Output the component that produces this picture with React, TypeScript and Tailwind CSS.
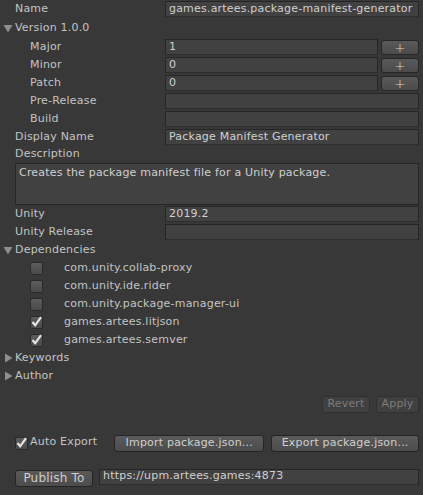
import React from 'react'

const font = { fontFamily: '"DejaVu Sans", Verdana, sans-serif' }

function Field({ value = '', className = '' }: { value?: string; className?: string }) {
  return (
    <div
      className={`h-[16px] flex items-center px-[3px] bg-[#414141] border border-[#262626] border-b-[#2e2e2e] text-[#d0d0d0] whitespace-nowrap overflow-hidden ${className}`}
    >
      {value}
    </div>
  )
}

function Row({ label, indent = false, value, plus = false, h = 'h-[18px]' }: { label: string; indent?: boolean; value?: string; plus?: boolean; h?: string }) {
  return (
    <div className={`flex items-center ${h}`}>
      <div className={`w-[165px] shrink-0 ${indent ? 'pl-[30px]' : 'pl-[15px]'}`}>{label}</div>
      <Field value={value} className="flex-1" />
      {plus && (
        <button className="ml-[3px] w-[38px] h-[15px] rounded-[3px] border border-[#262626] bg-gradient-to-b from-[#5a5a5a] to-[#4b4b4b] text-[#d8d8d8] text-[13px] font-light leading-none flex items-center justify-center">
          +
        </button>
      )}
    </div>
  )
}

function Arrow({ open }: { open: boolean }) {
  return (
    <svg width="10" height="10" viewBox="0 0 10 10" className="absolute left-[3px] top-1/2 -translate-y-1/2">
      {open ? <path d="M0.5 2 L9.5 2 L5 9.5 Z" fill="#8e8e8e" /> : <path d="M2 0.5 L9.5 5 L2 9.5 Z" fill="#8e8e8e" />}
    </svg>
  )
}

function Foldout({ label, open, h = 'h-[18px]' }: { label: string; open: boolean; h?: string }) {
  return (
    <div className={`relative flex items-center pl-[15px] ${h}`}>
      <Arrow open={open} />
      {label}
    </div>
  )
}

function Check({ on }: { on: boolean }) {
  return (
    <div className="relative w-[13px] h-[13px] rounded-[2px] border border-[#2a2a2a] bg-gradient-to-b from-[#5c5c5c] to-[#4a4a4a]">
      {on && (
        <svg width="13" height="13" viewBox="0 0 13 13" className="absolute -left-[1px] -top-[2px]">
          <path d="M2.5 7 L5.2 10.3 L11 2.2" fill="none" stroke="#e6e6e6" strokeWidth="2.2" strokeLinejoin="miter" />
        </svg>
      )}
    </div>
  )
}

function Btn({ children, className = '', disabled = false }: { children: React.ReactNode; className?: string; disabled?: boolean }) {
  return (
    <button
      className={`flex items-center justify-center rounded-[3px] border ${
        disabled
          ? 'border-[#303030] bg-[#404040] text-[#7c7c7c]'
          : 'border-[#242424] bg-gradient-to-b from-[#5a5a5a] to-[#4c4c4c] text-[#cfcfcf]'
      } ${className}`}
    >
      {children}
    </button>
  )
}

const deps = [
  { name: 'com.unity.collab-proxy', on: false },
  { name: 'com.unity.ide.rider', on: false },
  { name: 'com.unity.package-manager-ui', on: false },
  { name: 'games.artees.litjson', on: true },
  { name: 'games.artees.semver', on: true },
]

export default function App() {
  return (
    <div
      className="w-[423px] h-[495px] bg-[#383838] text-[#c4c4c4] text-[11px] tracking-[0.2px] pr-[4px] overflow-hidden"
      style={font}
    >
      <Row label="Name" value="games.artees.package-manifest-generator" />
      <Foldout label="Version 1.0.0" open h="h-[20px]" />
      <Row label="Major" indent value="1" plus />
      <Row label="Minor" indent value="0" plus />
      <Row label="Patch" indent value="0" plus />
      <Row label="Pre-Release" indent />
      <Row label="Build" indent />
      <Row label="Display Name" value="Package Manifest Generator" />
      <div className="h-[17px] flex items-center pl-[15px]">Description</div>
      <div className="ml-[15px] h-[42px] bg-[#414141] border border-[#262626] px-[3px] pt-[1px] text-[#d0d0d0]">
        Creates the package manifest file for a Unity package.
      </div>
      <Row label="Unity" value="2019.2" />
      <Row label="Unity Release" />
      <Foldout label="Dependencies" open />
      {deps.map(d => (
        <div key={d.name} className="h-[18px] flex items-center pl-[30px]">
          <Check on={d.on} />
          <span className="ml-[21px]">{d.name}</span>
        </div>
      ))}
      <Foldout label="Keywords" open={false} />
      <Foldout label="Author" open={false} />

      <div className="flex justify-end gap-[6px] mt-[11px]">
        <Btn disabled className="w-[48px] h-[17px]">Revert</Btn>
        <Btn disabled className="w-[43px] h-[17px]">Apply</Btn>
      </div>

      <div className="flex items-center mt-[22px] h-[16px] pl-[15px]">
        <Check on />
        <span className="ml-[2px] -mt-[2px]">Auto Export</span>
        <Btn className="ml-[17px] w-[150px] h-[17px]">Import package.json...</Btn>
        <Btn className="ml-[7px] flex-1 h-[17px]">Export package.json...</Btn>
      </div>

      <div className="flex items-center mt-[18px] h-[18px] pl-[15px]">
        <Btn className="w-[78px] h-[17px] text-[12px]">Publish To</Btn>
        <Field value="https://upm.artees.games:4873" className="ml-[6px] flex-1 -mt-[3px]" />
      </div>
    </div>
  )
}
